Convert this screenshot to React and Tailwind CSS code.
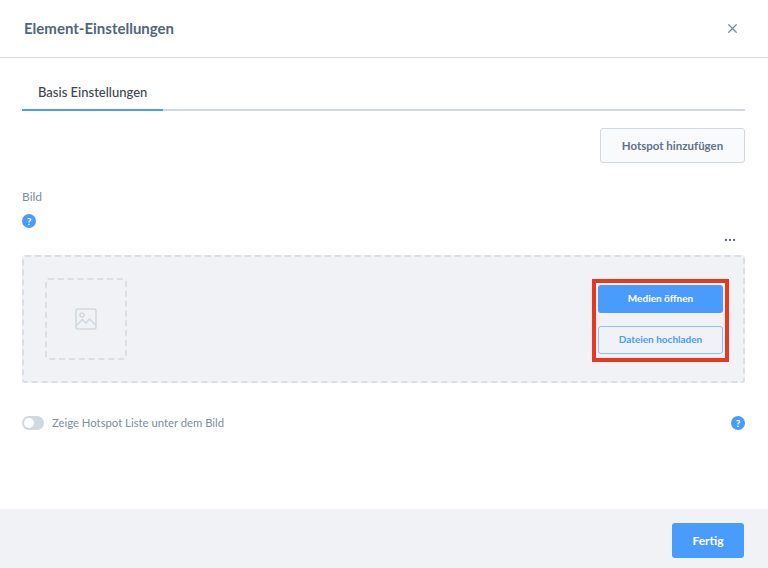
import React from 'react';
import { X, Ellipsis } from 'lucide-react';

const font = "font-['Lato','Noto_Sans',sans-serif]";

const HelpIcon = () => (
  <span className="flex h-[14px] w-[14px] items-center justify-center rounded-full bg-[#4a9cfc] text-[10px] font-bold leading-none text-white">
    ?
  </span>
);

const ImageIcon = () => (
  <svg width="22" height="22" viewBox="0 0 22 22" fill="none" stroke="#d1d9e0" strokeWidth="1.6">
    <rect x="1" y="1" width="20" height="20" rx="2" />
    <circle cx="7" cy="7" r="2" />
    <path d="M1.5 17.5 L7.5 11.5 L11 15 L14.5 11 L20.5 17" />
  </svg>
);

export default function App() {
  return (
    <div className={`flex h-[568px] w-[768px] flex-col bg-white ${font}`}>
      {/* Header */}
      <div className="flex h-[58px] items-center justify-between border-b border-[#d1d9e0] pl-6 pr-[28px]">
        <h1 className="text-[15px] font-bold text-[#52667a]">Element-Einstellungen</h1>
        <X size={15} strokeWidth={2} className="text-[#758ca3]" />
      </div>

      {/* Body */}
      <div className="flex flex-1 flex-col pl-[22px] pr-[23px]">
        <div className="mt-[17px] flex h-[36px] border-b-2 border-[#d1d9e0]">
          <div className="-mb-[2px] flex h-[36px] w-[141px] items-center border-b-2 border-[#4a9cfc] pl-4 pt-[2px] text-[13px] font-medium text-[#3d4650]">
            Basis Einstellungen
          </div>
        </div>

        <div className="mt-[17px] flex justify-end">
          <button className="h-[35px] w-[145px] rounded-[3px] border border-[#d1d9e0] bg-[#f9fafb] text-[11.5px] font-bold text-[#5f7287]">
            Hotspot hinzufügen
          </button>
        </div>

        <label className="mt-[26px] text-[12px] leading-[16px] text-[#7c8ea1]">Bild</label>
        <div className="mt-[9px]">
          <HelpIcon />
        </div>

        <div className="mt-[5px] flex h-[14px] justify-end pr-[8px]">
          <Ellipsis size={14} strokeWidth={2} className="text-[#52667a]" />
        </div>

        {/* Drop zone */}
        <div className="mt-[8px] flex h-[128px] items-center justify-between rounded-[3px] border-2 border-dashed border-[#d9dfe5] bg-[#f0f2f5] pl-[21px] pr-[14px]">
          <div className="flex h-[82px] w-[82px] items-center justify-center rounded-[3px] border-2 border-dashed border-[#d9dfe5]">
            <ImageIcon />
          </div>
          <div className="mt-[2px] flex h-[83px] w-[137px] flex-col gap-[13px] border-[4px] border-[#e8391f] px-[2px] pt-[2px]">
            <button className="h-[28px] shrink-0 rounded-[3px] bg-[#4a9cfc] text-[10px] font-bold text-white">
              Medien öffnen
            </button>
            <button className="h-[28px] shrink-0 rounded-[3px] border border-[#8cc0fd] text-[10px] font-bold text-[#4a9cfc]">
              Dateien hochladen
            </button>
          </div>
        </div>

        {/* Toggle row */}
        <div className="mt-[32px] flex items-center justify-between">
          <div className="flex items-center gap-2">
            <span className="flex h-[14px] w-[22px] items-center rounded-full bg-[#d1d9e0] pl-[2px]">
              <span className="h-[10px] w-[10px] rounded-full bg-white" />
            </span>
            <span className="text-[11.3px] text-[#7c8ea1]">Zeige Hotspot Liste unter dem Bild</span>
          </div>
          <HelpIcon />
        </div>
      </div>

      {/* Footer */}
      <div className="flex h-[59px] items-start justify-end bg-[#f0f2f5] pr-6 pt-[14px]">
        <button className="h-[35px] w-[72px] rounded-[3px] bg-[#4a9cfc] text-[12px] font-bold text-white">
          Fertig
        </button>
      </div>
    </div>
  );
}
